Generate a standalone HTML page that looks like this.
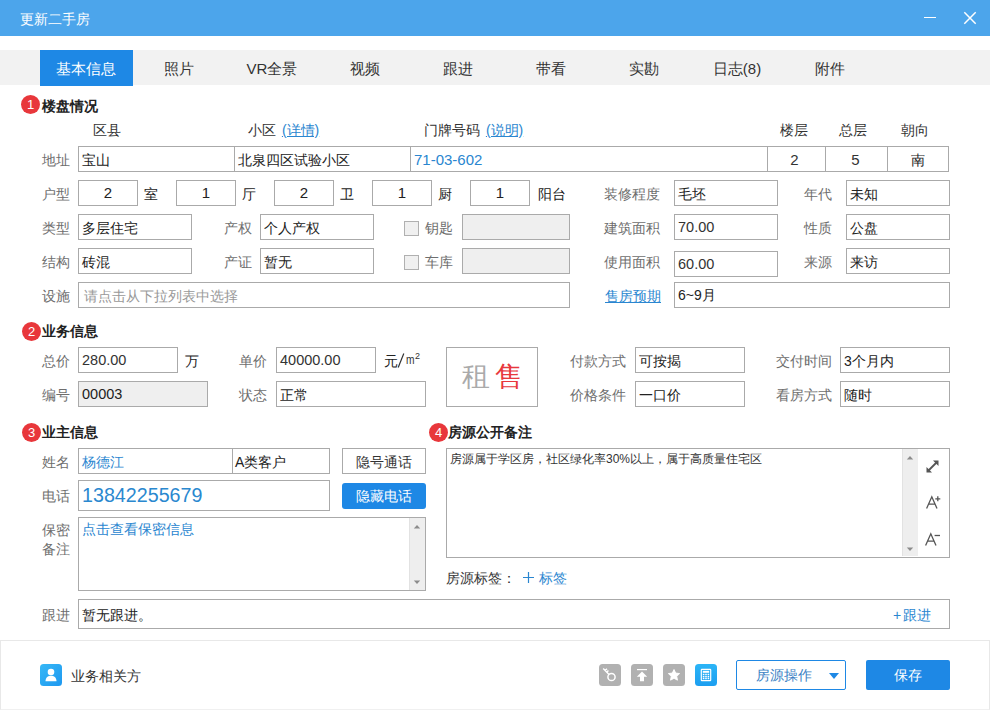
<!DOCTYPE html>
<html><head><meta charset="utf-8">
<style>
*{margin:0;padding:0;box-sizing:border-box}
html,body{width:990px;height:710px;overflow:hidden;background:#fff;font-family:"Liberation Sans",sans-serif;font-size:14px;color:#222}
.a{position:absolute;white-space:nowrap}
.t{position:absolute;white-space:nowrap;line-height:26px;height:26px;padding-top:1px}
.lb{color:#6e6e6e}
.bx{position:absolute;border:1px solid #aaaaaa;background:#fff;line-height:26px;padding-left:3px;white-space:nowrap;color:#222}
.c{text-align:center;padding-left:0}
.gr{background:#efefef}
.num{border-radius:50%;background:#e8373b;color:#fff;font-size:13px;text-align:center;line-height:19px;width:19px;height:19px}
.hd{font-weight:bold;color:#222;font-size:14px}
.lnk{color:#2a86d0;text-decoration:underline}
.blue{color:#2a86d0}
.tab{position:absolute;top:50px;height:36px;width:93px;line-height:37px;padding-right:1px;text-align:center;font-size:15px;color:#333}
</style></head><body>
<!-- title bar -->
<div class="a" style="left:0;top:0;width:990px;height:36px;background:#4ca5eb"></div>
<div class="a" style="left:20px;top:9px;line-height:20px;color:#fff;font-size:14px">更新二手房</div>
<div class="a" style="left:924px;top:17px;width:12px;height:1px;background:#fff"></div>
<svg class="a" style="left:962px;top:10px" width="16" height="16" viewBox="0 0 16 16"><path d="M2.3 2.3L13.7 13.7M13.7 2.3L2.3 13.7" stroke="#fff" stroke-width="1.5"/></svg>

<!-- tabs -->
<div class="a" style="left:0;top:50px;width:990px;height:35px;background:#f2f2f2"></div>
<div class="tab" style="left:40px;background:#1e88e5;color:#fff">基本信息</div>
<div class="tab" style="left:133px">照片</div>
<div class="tab" style="left:226px">VR全景</div>
<div class="tab" style="left:319px">视频</div>
<div class="tab" style="left:412px">跟进</div>
<div class="tab" style="left:505px">带看</div>
<div class="tab" style="left:598px">实勘</div>
<div class="tab" style="left:691px">日志(8)</div>
<div class="tab" style="left:784px">附件</div>

<!-- section 1 -->
<div class="a num" style="left:21px;top:95px">1</div>
<div class="a hd" style="left:42px;top:96px;line-height:20px">楼盘情况</div>

<div class="a" style="left:93px;top:120px;line-height:20px;color:#333">区县</div>
<div class="a" style="left:248px;top:120px;line-height:20px;color:#333">小区 <span class="lnk" style="margin-left:2px">(详情)</span></div>
<div class="a" style="left:424px;top:120px;line-height:20px;color:#333">门牌号码 <span class="lnk" style="margin-left:2px">(说明)</span></div>
<div class="a" style="left:780px;top:120px;line-height:20px;color:#333">楼层</div>
<div class="a" style="left:839px;top:120px;line-height:20px;color:#333">总层</div>
<div class="a" style="left:901px;top:120px;line-height:20px;color:#333">朝向</div>

<div class="t lb" style="left:42px;top:146px">地址</div>
<div class="bx" style="left:78px;top:146px;width:157px;height:26px">宝山</div>
<div class="bx" style="left:234px;top:146px;width:177px;height:26px">北泉四区试验小区</div>
<div class="bx blue" style="left:410px;top:146px;width:358px;height:26px;color:#2a86d0;font-size:15px">71-03-602</div>
<div class="bx c" style="left:767px;top:146px;width:59px;height:26px;padding-right:4px;color:#333;font-size:15px">2</div>
<div class="bx c" style="left:825px;top:146px;width:63px;height:26px;padding-right:2px;color:#333;font-size:15px">5</div>
<div class="bx c" style="left:887px;top:146px;width:62px;height:26px">南</div>

<div class="t lb" style="left:42px;top:180px">户型</div>
<div class="bx c" style="left:78px;top:180px;width:60px;height:26px;font-size:15px;line-height:24px">2</div>
<div class="t" style="left:144px;top:180px">室</div>
<div class="bx c" style="left:176px;top:180px;width:60px;height:26px;font-size:15px;line-height:24px">1</div>
<div class="t" style="left:242px;top:180px">厅</div>
<div class="bx c" style="left:274px;top:180px;width:60px;height:26px;font-size:15px;line-height:24px">2</div>
<div class="t" style="left:340px;top:180px">卫</div>
<div class="bx c" style="left:372px;top:180px;width:60px;height:26px;font-size:15px;line-height:24px">1</div>
<div class="t" style="left:438px;top:180px">厨</div>
<div class="bx c" style="left:470px;top:180px;width:60px;height:26px;font-size:15px;line-height:24px">1</div>
<div class="t" style="left:538px;top:180px">阳台</div>

<div class="t lb" style="left:42px;top:214px">类型</div>
<div class="bx" style="left:78px;top:214px;width:114px;height:26px">多层住宅</div>
<div class="t lb" style="left:224px;top:214px">产权</div>
<div class="bx" style="left:260px;top:214px;width:114px;height:26px">个人产权</div>
<div class="a" style="left:404px;top:221px;width:15px;height:15px;border:1px solid #b0b0b0;background:#f0f0f0"></div>
<div class="t lb" style="left:425px;top:214px">钥匙</div>
<div class="bx gr" style="left:462px;top:214px;width:108px;height:26px"></div>

<div class="t lb" style="left:42px;top:248px">结构</div>
<div class="bx" style="left:78px;top:248px;width:114px;height:26px">砖混</div>
<div class="t lb" style="left:224px;top:248px">产证</div>
<div class="bx" style="left:260px;top:248px;width:114px;height:26px">暂无</div>
<div class="a" style="left:404px;top:255px;width:15px;height:15px;border:1px solid #b0b0b0;background:#f0f0f0"></div>
<div class="t lb" style="left:425px;top:248px">车库</div>
<div class="bx gr" style="left:462px;top:248px;width:108px;height:26px"></div>

<div class="t lb" style="left:42px;top:282px">设施</div>
<div class="bx" style="left:78px;top:282px;width:492px;height:26px;color:#999;padding-left:5px">请点击从下拉列表中选择</div>

<div class="t lb" style="left:604px;top:180px">装修程度</div>
<div class="bx" style="left:674px;top:180px;width:104px;height:26px">毛坯</div>
<div class="t lb" style="left:804px;top:180px">年代</div>
<div class="bx" style="left:846px;top:180px;width:104px;height:26px">未知</div>
<div class="t lb" style="left:604px;top:214px">建筑面积</div>
<div class="bx" style="left:674px;top:214px;width:104px;height:26px;color:#333;font-size:14.5px;line-height:24px">70.00</div>
<div class="t lb" style="left:804px;top:214px">性质</div>
<div class="bx" style="left:846px;top:214px;width:104px;height:26px">公盘</div>
<div class="t lb" style="left:604px;top:248px">使用面积</div>
<div class="bx" style="left:674px;top:251px;width:104px;height:26px;color:#333;font-size:14.5px;line-height:24px">60.00</div>
<div class="t lb" style="left:804px;top:248px">来源</div>
<div class="bx" style="left:846px;top:248px;width:104px;height:26px">来访</div>
<div class="t lnk" style="left:605px;top:282px">售房预期</div>
<div class="bx" style="left:674px;top:282px;width:276px;height:26px;line-height:25px">6~9月</div>

<!-- section 2 -->
<div class="a num" style="left:22px;top:322px">2</div>
<div class="a hd" style="left:42px;top:321px;line-height:20px">业务信息</div>
<div class="t lb" style="left:42px;top:347px">总价</div>
<div class="bx" style="left:78px;top:347px;width:100px;height:26px;color:#333;font-size:14.5px;line-height:24px">280.00</div>
<div class="t" style="left:185px;top:347px">万</div>
<div class="t lb" style="left:239px;top:347px">单价</div>
<div class="bx" style="left:276px;top:347px;width:100px;height:26px;color:#333;font-size:14.5px;line-height:24px">40000.00</div>
<div class="t" style="left:384px;top:347px">元</div><svg class="a" style="left:397px;top:353px" width="8" height="15" viewBox="0 0 8 15"><path d="M6.8 0.5L1.2 14.5" stroke="#333" stroke-width="1.2"/></svg><div class="a" style="left:406px;top:353px;font-size:12px;line-height:14px;color:#333;transform:scaleX(0.85);transform-origin:0 0">m</div><div class="a" style="left:415px;top:351px;font-size:9px;line-height:10px;color:#333">2</div>
<div class="t lb" style="left:42px;top:381px">编号</div>
<div class="bx gr" style="left:78px;top:381px;width:130px;height:26px;color:#222;font-size:14.5px;line-height:24px">00003</div>
<div class="t lb" style="left:239px;top:381px">状态</div>
<div class="bx" style="left:276px;top:381px;width:150px;height:26px">正常</div>

<div class="a" style="left:446px;top:347px;width:92px;height:60px;border:1px solid #aaaaaa"></div>
<div class="a" style="left:462px;top:357px;line-height:40px;font-size:28px;color:#aaa">租</div>
<div class="a" style="left:495px;top:357px;line-height:40px;font-size:28px;color:#e8383d">售</div>

<div class="t lb" style="left:570px;top:347px">付款方式</div>
<div class="bx" style="left:635px;top:347px;width:110px;height:26px">可按揭</div>
<div class="t lb" style="left:776px;top:347px">交付时间</div>
<div class="bx" style="left:840px;top:347px;width:110px;height:26px">3个月内</div>
<div class="t lb" style="left:570px;top:381px">价格条件</div>
<div class="bx" style="left:635px;top:381px;width:110px;height:26px">一口价</div>
<div class="t lb" style="left:776px;top:381px">看房方式</div>
<div class="bx" style="left:840px;top:381px;width:110px;height:26px">随时</div>

<!-- section 3 -->
<div class="a num" style="left:22px;top:423px">3</div>
<div class="a hd" style="left:42px;top:422px;line-height:20px">业主信息</div>
<div class="t lb" style="left:42px;top:448px">姓名</div>
<div class="bx blue" style="left:78px;top:448px;width:155px;height:26px;color:#2a86d0">杨德江</div>
<div class="bx" style="left:232px;top:448px;width:98px;height:26px;padding-left:2px">A类客户</div>
<div class="bx c" style="left:342px;top:448px;width:84px;height:26px;color:#333">隐号通话</div>
<div class="t lb" style="left:42px;top:480px;line-height:30px">电话</div>
<div class="bx" style="left:78px;top:480px;width:252px;height:31px;line-height:29px;font-size:19.7px;color:#2a88cf">13842255679</div>
<div class="a" style="left:342px;top:483px;width:84px;height:26px;background:#1e88e5;border-radius:3px;color:#fff;text-align:center;line-height:26px">隐藏电话</div>
<div class="a lb" style="left:42px;top:521px;line-height:19px;white-space:normal;width:30px">保密<br>备注</div>
<div class="bx" style="left:78px;top:517px;width:348px;height:74px;line-height:22px;color:#2a86d0">点击查看保密信息</div>
<div class="a" style="left:409px;top:518px;width:16px;height:72px;background:#eeeeee;border-left:1px solid #e2e2e2"></div>
<svg class="a" style="left:413px;top:524px" width="8" height="5" viewBox="0 0 8 5"><path d="M0.8 4.5L4 1L7.2 4.5Z" fill="#8c8c8c"/></svg>
<svg class="a" style="left:413px;top:580px" width="8" height="5" viewBox="0 0 8 5"><path d="M0.8 0.5L4 4L7.2 0.5Z" fill="#8c8c8c"/></svg>
<div class="t lb" style="left:42px;top:599px;line-height:30px">跟进</div>
<div class="bx" style="left:78px;top:599px;width:872px;height:30px;line-height:30px">暂无跟进。</div>
<div class="a blue" style="left:893px;top:605px;line-height:20px">+<span style="margin-left:2px">跟进</span></div>

<!-- section 4 -->
<div class="a num" style="left:429px;top:423px">4</div>
<div class="a hd" style="left:448px;top:422px;line-height:20px">房源公开备注</div>
<div class="bx" style="left:446px;top:448px;width:504px;height:110px;line-height:20px;font-size:12px;color:#333">房源属于学区房，社区绿化率30%以上，属于高质量住宅区</div>
<div class="a" style="left:902px;top:449px;width:16px;height:107px;background:#eeeeee;border-left:1px solid #e2e2e2"></div>
<svg class="a" style="left:906px;top:455px" width="8" height="5" viewBox="0 0 8 5"><path d="M0.8 4.5L4 1L7.2 4.5Z" fill="#8c8c8c"/></svg>
<svg class="a" style="left:906px;top:547px" width="8" height="5" viewBox="0 0 8 5"><path d="M0.8 0.5L4 4L7.2 0.5Z" fill="#8c8c8c"/></svg>
<svg class="a" style="left:924px;top:458px" width="17" height="17" viewBox="0 0 17 17"><path d="M4 13L13 4" stroke="#555" stroke-width="1.8"/><path d="M9 2.5L14.5 2.5L14.5 8Z" fill="#555"/><path d="M2.5 9L2.5 14.5L8 14.5Z" fill="#555"/></svg>
<svg class="a" style="left:924px;top:494px" width="18" height="17" viewBox="0 0 18 17"><path d="M2.6 14.6L7.8 2.8L13 14.6M4.6 10.2H11" stroke="#555" stroke-width="1.3" fill="none"/><path d="M11.3 4.8H16.3M13.8 2.3V7.3" stroke="#555" stroke-width="1.3"/></svg>
<svg class="a" style="left:923px;top:531px" width="18" height="17" viewBox="0 0 18 17"><path d="M2.6 14.6L7.8 2.8L13 14.6M4.6 10.2H11" stroke="#555" stroke-width="1.3" fill="none"/><path d="M11.6 4.5H17" stroke="#555" stroke-width="1.3"/></svg>
<div class="a" style="left:446px;top:568px;line-height:20px;color:#333">房源标签：</div>
<svg class="a" style="left:523px;top:572px" width="11" height="11" viewBox="0 0 11 11"><path d="M5.5 0V11M0 5.5H11" stroke="#2a86d0" stroke-width="1.2"/></svg>
<div class="a blue" style="left:539px;top:568px;line-height:20px">标签</div>

<!-- footer -->
<div class="a" style="left:0;top:640px;width:990px;height:70px;border:1px solid #e8e8e8;border-bottom-color:#f0f0f0"></div>
<svg class="a" style="left:40px;top:664px" width="22" height="22" viewBox="0 0 22 22"><defs><linearGradient id="ug" x1="0" y1="0" x2="1" y2="1"><stop offset="0" stop-color="#36b8f6"/><stop offset="1" stop-color="#1e98f0"/></linearGradient></defs><rect width="22" height="22" rx="3.5" fill="url(#ug)"/><circle cx="11" cy="8" r="3.3" fill="#fff"/><path d="M5.5 17.2C5.6 13.6 8 11.8 11 11.8C14 11.8 16.4 13.6 16.5 17.2Z" fill="#fff"/></svg>
<div class="a" style="left:71px;top:666px;line-height:20px;color:#333">业务相关方</div>
<svg class="a" style="left:599px;top:664px" width="22" height="22" viewBox="0 0 22 22"><rect width="22" height="22" rx="3.5" fill="#b1b1b1"/><circle cx="12.5" cy="13" r="3.6" fill="none" stroke="#fff" stroke-width="1.5"/><path d="M4.2 4.6L10 10.4M6.2 6.6L8 4.8M7.8 8.2L9.4 6.6" stroke="#fff" stroke-width="1.4"/></svg>
<svg class="a" style="left:631px;top:664px" width="22" height="22" viewBox="0 0 22 22"><rect width="22" height="22" rx="3.5" fill="#b1b1b1"/><path d="M6 5.6H16" stroke="#fff" stroke-width="1.2"/><path d="M11 7.6L16.2 12.8H13V17.2H9V12.8H5.8Z" fill="#fff"/></svg>
<svg class="a" style="left:663px;top:664px" width="22" height="22" viewBox="0 0 22 22"><rect width="22" height="22" rx="3.5" fill="#b1b1b1"/><path d="M11.00 5.50L12.70 9.05L16.61 9.58L13.76 12.30L14.47 16.17L11.00 14.30L7.53 16.17L8.24 12.30L5.39 9.58L9.30 9.05Z" fill="#fff" stroke="#fff" stroke-width="0.9" stroke-linejoin="round"/></svg>
<svg class="a" style="left:695px;top:664px" width="22" height="22" viewBox="0 0 22 22"><defs><linearGradient id="cg" x1="0" y1="0" x2="0" y2="1"><stop offset="0" stop-color="#2bb5f7"/><stop offset="1" stop-color="#1c9ef0"/></linearGradient></defs><rect width="22" height="22" rx="3.5" fill="url(#cg)"/><rect x="6.3" y="5.4" width="9.4" height="11.3" rx="0.6" fill="none" stroke="#fff" stroke-width="1.2"/><rect x="7.8" y="6.8" width="6.4" height="2" fill="#fff"/><path d="M7.8 10.4h1.6M10.2 10.4h1.6M12.6 10.4h1.6M7.8 12.5h1.6M10.2 12.5h1.6M12.6 12.5h1.6M7.8 14.5h1.6M10.2 14.5h1.6M12.6 14.5h1.6" stroke="#fff" stroke-width="1.3"/></svg>
<div class="a" style="left:736px;top:660px;width:110px;height:30px;border:1px solid #1e88e5;border-radius:2px"></div>
<div class="a" style="left:756px;top:665px;line-height:20px;color:#3a7fc4">房源操作</div>
<div class="a" style="left:829px;top:673px;width:0;height:0;border-left:5.5px solid transparent;border-right:5.5px solid transparent;border-top:6px solid #1e88e5"></div>
<div class="a" style="left:866px;top:660px;width:84px;height:30px;background:#1e88e5;border-radius:2px;color:#fff;text-align:center;line-height:30px;font-size:14px">保存</div>
</body></html>
